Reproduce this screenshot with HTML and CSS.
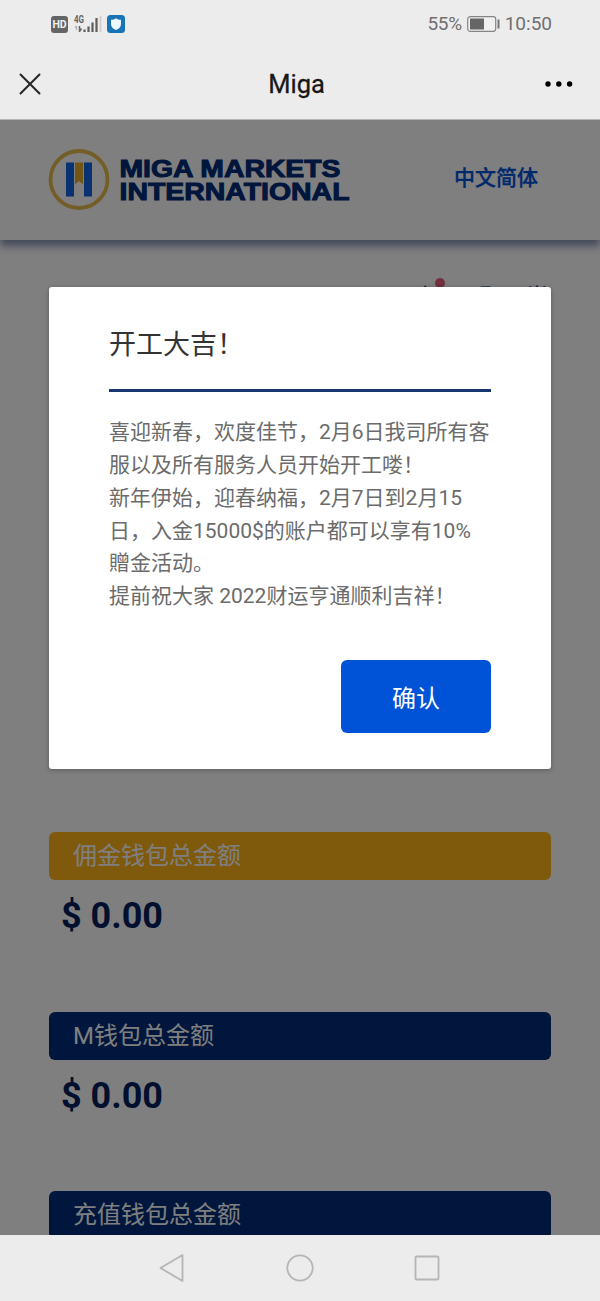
FILE: index.html
```html
<!DOCTYPE html>
<html lang="zh-CN">
<head>
<meta charset="utf-8">
<title>Miga</title>
<link rel="stylesheet" href="styles.css">
</head>
<body>
<div class="phone">
  <div class="status">
    <div class="status-left">
      <span class="hd">HD</span>
      <svg class="signal" width="28" height="20" viewBox="0 0 28 20">
        <text x="0" y="9" class="net" textLength="10" lengthAdjust="spacingAndGlyphs">4G</text>
        <path d="M2.500 12v4M1 13.500L2.500 12" stroke="#b0b0b0" stroke-width="1.300" fill="none"/>
        <path d="M5.500 12v6M7.500 14.500L5.500 17.500" stroke="#666" stroke-width="1.500" fill="none"/>
        <path d="M10.500 15.500v2.500M14.500 12.500v5.500M18.500 8.500v9.500M22.500 4v14" stroke="#5e5e5e" stroke-width="2.200"/>
        <path d="M26.500 2v16" stroke="#d6cccc" stroke-width="1.800"/>
      </svg>
      <svg class="shield" width="18" height="18" viewBox="0 0 18 18">
        <rect width="18" height="18" rx="3.500" fill="#1874b5"/>
        <path d="M9 3.200c1.500 1.200 3 1.600 5 1.600V9c0 3-2 5-5 6C6 14 4 12 4 9V4.800C6 4.800 7.500 4.400 9 3.200z" fill="#eef8ff"/>
      </svg>
    </div>
    <div class="status-right">
      <span class="percent">55%</span>
      <svg width="33" height="16" viewBox="0 0 33 16">
        <rect x="0.700" y="0.700" width="28" height="14.600" rx="2.500" fill="#f0f0f0" stroke="#858585" stroke-width="1.200"/>
        <rect x="3" y="2.500" width="14" height="11" fill="#666"/>
        <path d="M31.500 3.500v9" stroke="#777" stroke-width="2"/>
      </svg>
      <span>10:50</span>
    </div>
  </div>
  <div class="titlebar">
    <svg width="22" height="22" viewBox="0 0 22 22"><path d="M1.500 1.500l19 19M20.500 1.500l-19 19" stroke="#252525" stroke-width="2" stroke-linecap="round"/></svg>
    <h1 class="title">Miga</h1>
    <svg width="28" height="6" viewBox="0 0 28 6"><circle cx="3" cy="3" r="2.700"/><circle cx="13.800" cy="3" r="2.700"/><circle cx="24.600" cy="3" r="2.700"/></svg>
  </div>
  <div class="viewport">
    <div class="header">
      <svg width="304" height="62" viewBox="0 0 304 62">
        <circle cx="31" cy="30.500" r="28.500" fill="none" stroke="#e8bc50" stroke-width="3.800"/>
        <path d="M18 13.500h8v34h-8zM36 13.500h8v34h-8z" fill="#1164e0"/>
        <path d="M27 13.500h8v22l-4-3.500-4 3.500z" fill="#e5ae28"/>
        <text class="brand" x="71.500" y="28" textLength="221" lengthAdjust="spacingAndGlyphs">MIGA MARKETS</text>
        <text class="brand" x="71.500" y="51" textLength="230" lengthAdjust="spacingAndGlyphs">INTERNATIONAL</text>
      </svg>
      <span class="lang">中文简体</span>
    </div>
    <div class="account"><span class="bell">小<i class="dot"></i></span><span>明</span><span>尚</span></div>
    <div class="wallets">
      <div class="wallet"><div class="label gold">佣金钱包总金额</div><div class="amount">$ 0.00</div></div>
      <div class="wallet"><div class="label">M钱包总金额</div><div class="amount">$ 0.00</div></div>
      <div class="wallet"><div class="label">充值钱包总金额</div></div>
    </div>
    <div class="overlay">
      <div class="modal">
        <h2 class="modal-title">开工大吉！</h2>
        <p class="modal-text">喜迎新春，欢度佳节，2月6日我司所有客<br>服以及所有服务人员开始开工喽！<br>新年伊始，迎春纳福，2月7日到2月15<br>日，入金15000$的账户都可以享有10%<br>贈金活动。<br>提前祝大家 2022财运亨通顺利吉祥！</p>
        <button class="confirm">确认</button>
      </div>
    </div>
  </div>
  <div class="navbar">
    <svg width="26" height="30" viewBox="0 0 26 30"><path d="M23.500 2v26L1.500 15z" fill="none" stroke="#b5b5b5" stroke-width="1.800" stroke-linejoin="round"/></svg>
    <svg width="28" height="28" viewBox="0 0 28 28"><circle cx="14" cy="14" r="12.700" fill="none" stroke="#b5b5b5" stroke-width="1.800"/></svg>
    <svg width="26" height="26" viewBox="0 0 26 26"><rect x="1.500" y="1.500" width="23" height="23" rx="1" fill="none" stroke="#b5b5b5" stroke-width="1.800"/></svg>
  </div>
</div>
</body>
</html>
```
FILE: styles.css
```css
* { box-sizing: border-box; }
body { margin: 0; font-family: Roboto, "Noto Sans CJK SC", sans-serif; background: #ececec; }
.phone { width: 600px; height: 1301px; display: flex; flex-direction: column; overflow: hidden; }
.status { height: 48px; padding: 0 48px 0 51px; display: flex; align-items: center; justify-content: space-between; }
.status-left { display: flex; align-items: center; gap: 6px; }
.hd { width: 17px; height: 17px; border-radius: 3px; background: #646464; color: #f0f0f0; font-size: 10.500px; font-weight: 700; line-height: 17px; text-align: center; }
.net { font: 700 10px Roboto, sans-serif; fill: #666; }
.shield { margin-left: -1px; }
.status-right { display: flex; align-items: center; gap: 5px; font-size: 19px; line-height: 24px; color: #707070; }
.percent { letter-spacing: -0.400px; }
.titlebar { height: 72px; padding: 0 27px 0 19px; display: flex; align-items: center; justify-content: space-between; border-bottom: 1px solid #b5b5b5; }
.title { margin: 0 0 0 7px; font-size: 25.500px; font-weight: 400; color: #181818; -webkit-text-stroke: 0.300px #181818; }
.viewport { position: relative; flex: 0 0 1115px; background: #fff; overflow: hidden; }
.header { height: 120px; padding: 0 62px 0 48px; display: flex; align-items: center; justify-content: space-between; box-shadow: 0 6px 8px rgba(20, 40, 110, .5); }
.brand { font: 900 24.500px "Liberation Sans", Arial, sans-serif; fill: #002c78; stroke: #002c78; stroke-width: 1; }
.lang { font-size: 21px; font-weight: 500; -webkit-text-stroke: 0.300px #0052d6; color: #0052d6; margin-top: -9px; }
.account { height: 592px; padding: 41px 52px 0 0; display: flex; justify-content: flex-end; gap: 34px; font-size: 22px; line-height: 32px; color: #002c78; }
.bell { position: relative; }
.dot { position: absolute; right: -9px; top: -3px; width: 10px; height: 10px; border-radius: 50%; background: #e36078; }
.wallets { padding: 0 49px; }
.wallet { height: 179.500px; }
.label { height: 48px; padding-left: 24px; border-radius: 6px; background: #002c78; color: #fff; font-size: 24px; font-weight: 400; line-height: 49px; }
.gold { background: #ffb41a; }
.amount { padding: 14px 0 0 12px; font-size: 36px; font-weight: 700; line-height: 44px; color: #00205c; }
.overlay { position: absolute; inset: 0; background: rgba(0, 0, 0, .5); }
.modal { width: 502px; height: 482px; margin: 167px 0 0 49px; padding: 36px 60px; display: flex; flex-direction: column; background: #fff; border-radius: 3px; box-shadow: 0 1px 5px rgba(0, 0, 0, .3); }
.modal-title { margin: 0; height: 69px; font-size: 27px; font-weight: 400; line-height: 45px; color: #333; border-bottom: 3px solid #17366f; }
.modal-text { margin: 24px 0 0; white-space: nowrap; font-size: 21px; line-height: 32.900px; color: #6b6b6b; }
.confirm { align-self: flex-end; width: 150px; height: 73px; margin-top: 47px; padding: 0; border: 0; border-radius: 6px; background: #0052d6; color: #fff; font-family: "Noto Sans CJK SC", sans-serif; font-size: 24px; }
.navbar { flex: 1; padding: 0 160px 0 159px; display: flex; align-items: center; justify-content: space-between; background: #ececec; }
```
